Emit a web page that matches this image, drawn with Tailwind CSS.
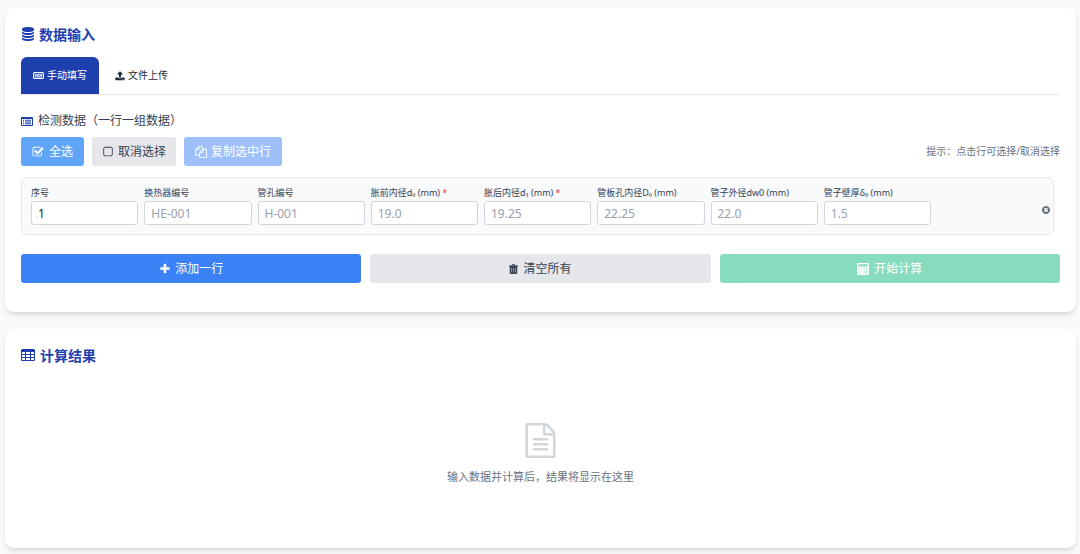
<!DOCTYPE html>
<html lang="zh-CN">
<head>
<meta charset="utf-8">
<meta name="viewport" content="width=device-width, initial-scale=1">
<title>数据输入</title>
<script src="https://cdn.jsdelivr.net/npm/@tailwindcss/browser@4"></script>
</head>
<body class="min-h-screen bg-[#f8fafc] pt-2 pr-1 pb-1 pl-[5px] font-['Noto_Sans','Noto_Sans_CJK_SC',sans-serif] text-[12px] text-gray-700">
<main class="flex flex-col gap-[17px]">
  <section class="rounded-[9px] bg-white px-4 pt-4 pb-[29px] shadow-md">
    <h2 class="mb-[13px] flex h-[20px] items-center gap-1 text-[14px] font-bold text-[#1e40af]">
      <svg class="size-[14px]" viewBox="0 0 1792 1792" fill="currentColor" aria-hidden="true"><path d="M896 768q237 0 443-43t325-127v170q0 69-103 128t-280 93.5-385 34.5-385-34.5-280-93.5-103-128v-170q119 84 325 127t443 43zm0 768q237 0 443-43t325-127v170q0 69-103 128t-280 93.5-385 34.5-385-34.5-280-93.5-103-128v-170q119 84 325 127t443 43zm0-384q237 0 443-43t325-127v170q0 69-103 128t-280 93.5-385 34.5-385-34.5-280-93.5-103-128v-170q119 84 325 127t443 43zm0-1152q208 0 385 34.5t280 93.5 103 128v128q0 69-103 128t-280 93.5-385 34.5-385-34.5-280-93.5-103-128v-128q0-69 103-128t280-93.5 385-34.5z"/></svg>
      数据输入
    </h2>
    <div class="mb-[15px] flex border-b border-gray-200 text-[10px]" role="tablist">
      <button type="button" role="tab" aria-selected="true" class="flex h-[37px] items-center gap-[3px] rounded-t-md bg-[#1e40af] px-[12px] text-white">
        <svg class="h-[7px] w-[11px]" viewBox="0 0 22 14" aria-hidden="true"><rect x="1" y="1" width="20" height="12" rx="1" fill="#fff" fill-opacity=".25" stroke="currentColor" stroke-width="2"/><path fill="currentColor" d="M4 4h2v1.500H4zM7 4h2v1.500H7zM10 4h2v1.500h-2zM13 4h2v1.500h-2zM16 4h2v1.500h-2zM4 6.500h3V8H4zM8 6.500h2V8H8zM11 6.500h2V8h-2zM14 6.500h4V8h-4zM4 9h2v1.500H4zM7 9h8v1.500H7zM16 9h2v1.500h-2z"/></svg>
        手动填写
      </button>
      <button type="button" role="tab" aria-selected="false" class="flex h-[37px] items-center gap-[3px] px-4 text-gray-800">
        <svg class="size-[10px]" viewBox="0 0 1792 1792" fill="currentColor" aria-hidden="true"><path d="M1344 1472q0-26-19-45t-45-19-45 19-19 45 19 45 45 19 45-19 19-45zm256 0q0-26-19-45t-45-19-45 19-19 45 19 45 45 19 45-19 19-45zm128-224v320q0 40-28 68t-68 28h-1472q-40 0-68-28t-28-68v-320q0-40 28-68t68-28h427q21 56 70.5 92t110.5 36h256q61 0 110.5-36t70.5-92h427q40 0 68 28t28 68zm-325-648q-17 40-59 40h-256v448q0 26-19 45t-45 19h-256q-26 0-45-19t-19-45v-448h-256q-42 0-59-40-17-39 14-69l448-448q18-19 45-19t45 19l448 448q31 30 14 69z"/></svg>
        文件上传
      </button>
    </div>
    <h3 class="mb-[5px] flex h-[22px] items-center gap-[5px] text-[12px] text-gray-700">
      <svg class="h-[9px] w-[12px]" viewBox="0 0 24 18" fill="#1e40af" fill-rule="evenodd" aria-hidden="true"><path d="M1.500 0h21Q24 0 24 1.500v15q0 1.500-1.500 1.500h-21Q0 18 0 16.500v-15Q0 0 1.500 0zM2 4v12h20V4zM4 5.500h2v2H4zM8 5.500h12v2H8zM4 9h2v2H4zM8 9h12v2H8zM4 12.500h2v2H4zM8 12.500h12v2H8z"/></svg>
      检测数据（一行一组数据）
    </h3>
    <div class="mb-[11px] flex items-center gap-2">
      <button type="button" class="flex h-[29px] items-center gap-[5px] rounded-[3px] bg-[#60a5fa] px-[11px] text-white">
        <svg class="size-[12px]" viewBox="0 0 1792 1792" fill="currentColor" aria-hidden="true"><path d="M1472 930v318q0 119-84.5 203.5t-203.5 84.5h-832q-119 0-203.5-84.5t-84.5-203.5v-832q0-119 84.5-203.5t203.5-84.5h832q63 0 117 25 15 7 18 23 3 17-9 29l-49 49q-10 10-23 10-3 0-9-2-23-6-45-6h-832q-66 0-113 47t-47 113v832q0 66 47 113t113 47h832q66 0 113-47t47-113v-254q0-13 9-22l64-64q10-10 23-10 6 0 12 3 20 8 20 29zm231-489l-814 814q-24 24-57 24t-57-24l-430-430q-24-24-24-57t24-57l110-110q24-24 57-24t57 24l263 263 647-647q24-24 57-24t57 24l110 110q24 24 24 57t-24 57z"/></svg>
        全选
      </button>
      <button type="button" class="flex h-[29px] items-center gap-1 rounded-[3px] bg-gray-200 px-[10px] text-gray-700">
        <svg class="size-[12px]" viewBox="0 0 1792 1792" fill="currentColor" aria-hidden="true"><path d="M1312 256h-832q-66 0-113 47t-47 113v832q0 66 47 113t113 47h832q66 0 113-47t47-113v-832q0-66-47-113t-113-47zm288 160v832q0 119-84.5 203.5t-203.5 84.5h-832q-119 0-203.5-84.5t-84.5-203.5v-832q0-119 84.5-203.5t203.5-84.5h832q119 0 203.5 84.5t84.5 203.5z"/></svg>
        取消选择
      </button>
      <button type="button" disabled class="flex h-[29px] items-center gap-1 rounded-[3px] bg-[#9dc0fb] px-[11px] text-white">
        <svg class="size-[12px]" viewBox="0 0 1792 1792" fill="currentColor" aria-hidden="true"><path d="M1696 384q40 0 68 28t28 68v1216q0 40-28 68t-68 28h-960q-40 0-68-28t-28-68v-288h-544q-40 0-68-28t-28-68v-672q0-40 20-88t48-76l408-408q28-28 76-48t88-20h416q40 0 68 28t28 68v328q68-40 128-40h416zm-544 213l-299 299h299v-299zm-640-384l-299 299h299v-299zm196 647l316-316v-416h-384v416q0 40-28 68t-68 28h-416v640h512v-256q0-40 20-88t48-76zm956 804v-1152h-384v416q0 40-28 68t-68 28h-416v640h896z"/></svg>
        复制选中行
      </button>
      <p class="ml-auto text-[10px] text-gray-500">提示：点击行可选择/取消选择</p>
    </div>
    <div class="mr-[6px] mb-[19px] flex items-center rounded-md border border-gray-200 bg-[#f8fafc] py-[9px] pr-[3px] pl-[9px]">
      <div class="grid flex-1 grid-cols-8 gap-[6px] text-[9px] leading-[12px] whitespace-nowrap text-gray-700">
        <div class="flex flex-col gap-[2px]"><label for="f1">序号</label><input id="f1" value="1" class="h-[24px] w-full rounded-[3px] border border-gray-300 bg-white px-[6px] text-[12px] text-gray-800 placeholder:text-gray-400"></div>
        <div class="flex flex-col gap-[2px]"><label for="f2">换热器编号</label><input id="f2" placeholder="HE-001" class="h-[24px] w-full rounded-[3px] border border-gray-300 bg-white px-[6px] text-[12px] text-gray-800 placeholder:text-gray-400"></div>
        <div class="flex flex-col gap-[2px]"><label for="f3">管孔编号</label><input id="f3" placeholder="H-001" class="h-[24px] w-full rounded-[3px] border border-gray-300 bg-white px-[6px] text-[12px] text-gray-800 placeholder:text-gray-400"></div>
        <div class="flex flex-col gap-[2px]"><label for="f4">胀前内径d₀ (mm) <span class="text-red-500">*</span></label><input id="f4" placeholder="19.0" class="h-[24px] w-full rounded-[3px] border border-gray-300 bg-white px-[6px] text-[12px] text-gray-800 placeholder:text-gray-400"></div>
        <div class="flex flex-col gap-[2px]"><label for="f5">胀后内径d₁ (mm) <span class="text-red-500">*</span></label><input id="f5" placeholder="19.25" class="h-[24px] w-full rounded-[3px] border border-gray-300 bg-white px-[6px] text-[12px] text-gray-800 placeholder:text-gray-400"></div>
        <div class="flex flex-col gap-[2px]"><label for="f6">管板孔内径D₀ (mm)</label><input id="f6" placeholder="22.25" class="h-[24px] w-full rounded-[3px] border border-gray-300 bg-white px-[6px] text-[12px] text-gray-800 placeholder:text-gray-400"></div>
        <div class="flex flex-col gap-[2px]"><label for="f7">管子外径dw0 (mm)</label><input id="f7" placeholder="22.0" class="h-[24px] w-full rounded-[3px] border border-gray-300 bg-white px-[6px] text-[12px] text-gray-800 placeholder:text-gray-400"></div>
        <div class="flex flex-col gap-[2px]"><label for="f8">管子壁厚δ₀ (mm)</label><input id="f8" placeholder="1.5" class="h-[24px] w-full rounded-[3px] border border-gray-300 bg-white px-[6px] text-[12px] text-gray-800 placeholder:text-gray-400"></div>
      </div>
      <div class="flex w-[119px] justify-end pt-2 text-gray-500">
        <button type="button" aria-label="删除此行"><svg class="size-[8px]" viewBox="128 128 1536 1536" fill="currentColor" aria-hidden="true"><path d="M1277 1122q0-26-19-45l-181-181 181-181q19-19 19-45 0-27-19-46l-90-90q-19-19-46-19-26 0-45 19l-181 181-181-181q-19-19-45-19-27 0-46 19l-90 90q-19 19-19 46 0 26 19 45l181 181-181 181q-19 19-19 45 0 27 19 46l90 90q19 19 46 19 26 0 45-19l181-181 181 181q19 19 45 19 27 0 46-19l90-90q19-19 19-46zm387-226q0 209-103 385.5t-279.5 279.5-385.5 103-385.5-103-279.5-279.5-103-385.5 103-385.5 279.5-279.5 385.5-103 385.5 103 279.5 279.5 103 385.5z"/></svg></button>
      </div>
    </div>
    <div class="grid grid-cols-3 gap-[9px]">
      <button type="button" class="flex h-[29px] items-center justify-center gap-1 rounded-[3px] bg-[#3b82f6] text-white">
        <svg class="size-[12px]" viewBox="0 0 1792 1792" fill="currentColor" aria-hidden="true"><path d="M1600 736v192q0 40-28 68t-68 28h-416v416q0 40-28 68t-68 28h-192q-40 0-68-28t-28-68v-416h-416q-40 0-68-28t-28-68v-192q0-40 28-68t68-28h416v-416q0-40 28-68t68-28h192q40 0 68 28t28 68v416h416q40 0 68 28t28 68z"/></svg>
        添加一行
      </button>
      <button type="button" class="flex h-[29px] items-center justify-center gap-[5px] rounded-[3px] bg-gray-200 text-gray-700">
        <svg class="h-[10px] w-[9px]" viewBox="0 0 18 20" fill="currentColor" fill-rule="evenodd" aria-hidden="true"><path d="M5 3l1-2q.5-1 1.500-1h3q1 0 1.500 1l1 2h4.500q.5 0 .5.500v1q0 .5-.5.500h-17Q0 5 0 4.500v-1Q0 3 .5 3zM7 3h4l-.7-1.500h-2.600zM1.500 5h15v12.500q0 2.500-2.500 2.500H4q-2.500 0-2.500-2.500zM5 8v9h1V8zM8.500 8v9h1V8zM12 8v9h1V8z"/></svg>
        清空所有
      </button>
      <button type="button" disabled class="flex h-[29px] items-center justify-center gap-[5px] rounded-[3px] bg-[#87dcc0] text-white">
        <svg class="size-[12px]" viewBox="0 0 24 24" fill="currentColor" fill-rule="evenodd" aria-hidden="true"><path d="M2 0h20q2 0 2 2v20q0 2-2 2H2q-2 0-2-2V2Q0 0 2 0zM3 2.500v4.500h18V2.500zM3.500 10v2h2v-2zM8.500 10v2h2v-2zM13.500 10v2h2v-2zM18.500 10v2h2v-2zM3.500 14.500v2h2v-2zM8.500 14.500v2h2v-2zM13.500 14.500v2h2v-2zM18.500 14.500v6.500h2v-6.500zM3.500 19v2h2v-2zM8.500 19v2h2v-2zM13.500 19v2h2v-2z"/></svg>
        开始计算
      </button>
    </div>
  </section>
  <section class="rounded-[9px] bg-white px-4 pt-4 pb-[62px] shadow-md">
    <h2 class="mb-[58px] flex h-[20px] items-center gap-[5px] text-[14px] font-bold text-[#1e40af]">
      <svg class="h-[12px] w-[14px]" viewBox="0 0 28 24" fill="currentColor" fill-rule="evenodd" aria-hidden="true"><path d="M2.500 0h23Q28 0 28 2.500v19q0 2.500-2.500 2.500h-23Q0 24 0 21.500v-19Q0 0 2.500 0zM2 6v4h6V6zM10 6v4h8V6zM20 6v4h6V6zM2 12v4h6v-4zM10 12v4h8v-4zM20 12v4h6v-4zM2 18v4h6v-4zM10 18v4h8v-4zM20 18v4h6v-4z"/></svg>
      计算结果
    </h2>
    <div class="flex flex-col items-center gap-[10px] text-gray-500">
      <svg class="size-[35px] text-gray-300" viewBox="0 0 1792 1792" fill="currentColor" aria-hidden="true"><path d="M1596 380q28 28 48 76t20 88v1152q0 40-28 68t-68 28h-1344q-40 0-68-28t-28-68v-1600q0-40 28-68t68-28h896q40 0 88 20t76 48zm-444-244v376h376q-10-29-22-41l-313-313q-12-12-41-22zm384 1528v-1024h-416q-40 0-68-28t-28-68v-416h-768v1536h1280zm-1024-864q0-14 9-23t23-9h704q14 0 23 9t9 23v64q0 14-9 23t-23 9h-704q-14 0-23-9t-9-23v-64zm736 224q14 0 23 9t9 23v64q0 14-9 23t-23 9h-704q-14 0-23-9t-9-23v-64q0-14 9-23t23-9h704zm0 256q14 0 23 9t9 23v64q0 14-9 23t-23 9h-704q-14 0-23-9t-9-23v-64q0-14 9-23t23-9h704z"/></svg>
      <p class="text-[11px] leading-[18px]">输入数据并计算后，结果将显示在这里</p>
    </div>
  </section>
</main>
</body>
</html>
